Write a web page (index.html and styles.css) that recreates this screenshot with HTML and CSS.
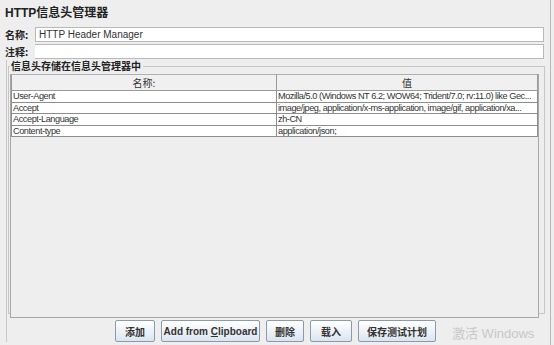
FILE: index.html
```html
<!DOCTYPE html>
<html lang="zh-CN">
<head>
  <meta charset="UTF-8" />
  <title>HTTP信息头管理器</title>
  <link rel="stylesheet" href="styles.css">
</head>
<body>
  <div class="window">
    <h1>HTTP信息头管理器</h1>

    <div class="field-row">
      <label>名称:</label>
      <input type="text" class="text-field" value="HTTP Header Manager" />
    </div>
    <div class="field-row">
      <label>注释:</label>
      <input type="text" class="text-field comment" value="" />
    </div>

    <div class="lower">
      <fieldset class="group">
        <legend>信息头存储在信息头管理器中</legend>
        <div class="table-pane">
          <table class="headers">
            <thead>
              <tr><th class="col-name">名称:</th><th>值</th></tr>
            </thead>
            <tbody>
              <tr><td>User-Agent</td><td>Mozilla/5.0 (Windows NT 6.2; WOW64; Trident/7.0; rv:11.0) like Gec...</td></tr>
              <tr><td>Accept</td><td>image/jpeg, application/x-ms-application, image/gif, application/xa...</td></tr>
              <tr><td>Accept-Language</td><td>zh-CN</td></tr>
              <tr><td>Content-type</td><td>application/json;</td></tr>
            </tbody>
          </table>
        </div>
      </fieldset>

      <div class="buttons">
        <button class="btn w40">添加</button>
        <button class="btn w99">Add from <u>C</u>lipboard</button>
        <button class="btn w38">删除</button>
        <button class="btn w42">载入</button>
        <button class="btn w78">保存测试计划</button>
        <span class="watermark">激活 Windows</span>
      </div>
    </div>
  </div>
</body>
</html>
```

FILE: styles.css
```css
body {
  margin: 0;
  background-color: #eeeeee;
  font-family: "Liberation Sans", Arial, "Noto Sans CJK SC", sans-serif;
  font-size: 10px;
  color: #333333;
  overflow: hidden;
}

.window {
  width: 551px;
  height: 345px;
  border-right: 1px solid #b8b8b8;
  box-sizing: border-box;
}

h1 {
  margin: 0;
  padding: 6px 0 0 5px;
  height: 20px;
  font-size: 12px;
  line-height: 14px;
  font-weight: bold;
  color: #222222;
}

.field-row {
  display: flex;
  align-items: center;
  height: 16px;
  margin-bottom: 1px;
}

.field-row label {
  width: 35px;
  padding-left: 5px;
  box-sizing: border-box;
  font-weight: bold;
  font-size: 10px;
  color: #222222;
  font-family: "Noto Sans CJK SC", sans-serif;
}

.text-field {
  flex: none;
  width: 509px;
  height: 15px;
  margin: 0;
  padding: 0 3px;
  border: 1px solid #b9b9b9;
  box-sizing: border-box;
  background: #ffffff;
  font-family: "Liberation Sans", Arial, sans-serif;
  font-size: 10px;
  color: #333333;
}

.text-field.comment {
  border-left: none;
}

.lower {
  margin-left: 6px;
  border-left: 1px solid #c9c9c9;
}

.group {
  margin: 0 5px 0 1px;
  padding: 2px 5px 3px 1px;
  height: 254px;
  box-sizing: border-box;
  border: 1px solid #c6c6c6;
}

.group legend {
  padding: 0 2px 0 1px;
  font-weight: bold;
  font-size: 10px;
  color: #222222;
  font-family: "Noto Sans CJK SC", sans-serif;
  line-height: 12px;
}

.table-pane {
  height: 243px;
  border: 1px solid #a8a8a8;
  border-top: none;
  background: #eeeeee;
}

.headers {
  width: 100%;
  border-collapse: collapse;
  table-layout: fixed;
}

.headers th {
  height: 13px;
  padding: 0;
  font-weight: normal;
  font-size: 10px;
  color: #333333;
  background: #f0f0f0;
  border: 1px solid #9a9a9a;
  border-top-color: #b0b0b0;
  font-family: "Noto Sans CJK SC", sans-serif;
}

.headers .col-name {
  width: 264px;
}

.headers td {
  height: 10.5px;
  padding: 0 1px;
  line-height: 10px;
  font-size: 9.2px;
  letter-spacing: -0.45px;
  background: #ffffff;
  border: 1px solid #8e8e8e;
  white-space: nowrap;
  overflow: hidden;
}

.buttons {
  display: flex;
  align-items: flex-start;
  padding: 6px 0 0 108px;
  gap: 6px;
}

.btn {
  flex: none;
  height: 22px;
  padding: 0;
  border: 1px solid #8a9bb0;
  border-radius: 2px;
  background: linear-gradient(#ffffff, #dbe5ef);
  font-family: "Liberation Sans", Arial, "Noto Sans CJK SC", sans-serif;
  font-size: 10px;
  font-weight: bold;
  color: #333333;
}

.w38 { width: 38px; }
.w40 { width: 40px; }
.w42 { width: 42px; }
.w78 { width: 78px; }
.w99 { width: 99px; }

.watermark {
  margin: 7px 0 0 10px;
  font-size: 13px;
  line-height: 14px;
  color: #c8c8c8;
  white-space: nowrap;
}
```
